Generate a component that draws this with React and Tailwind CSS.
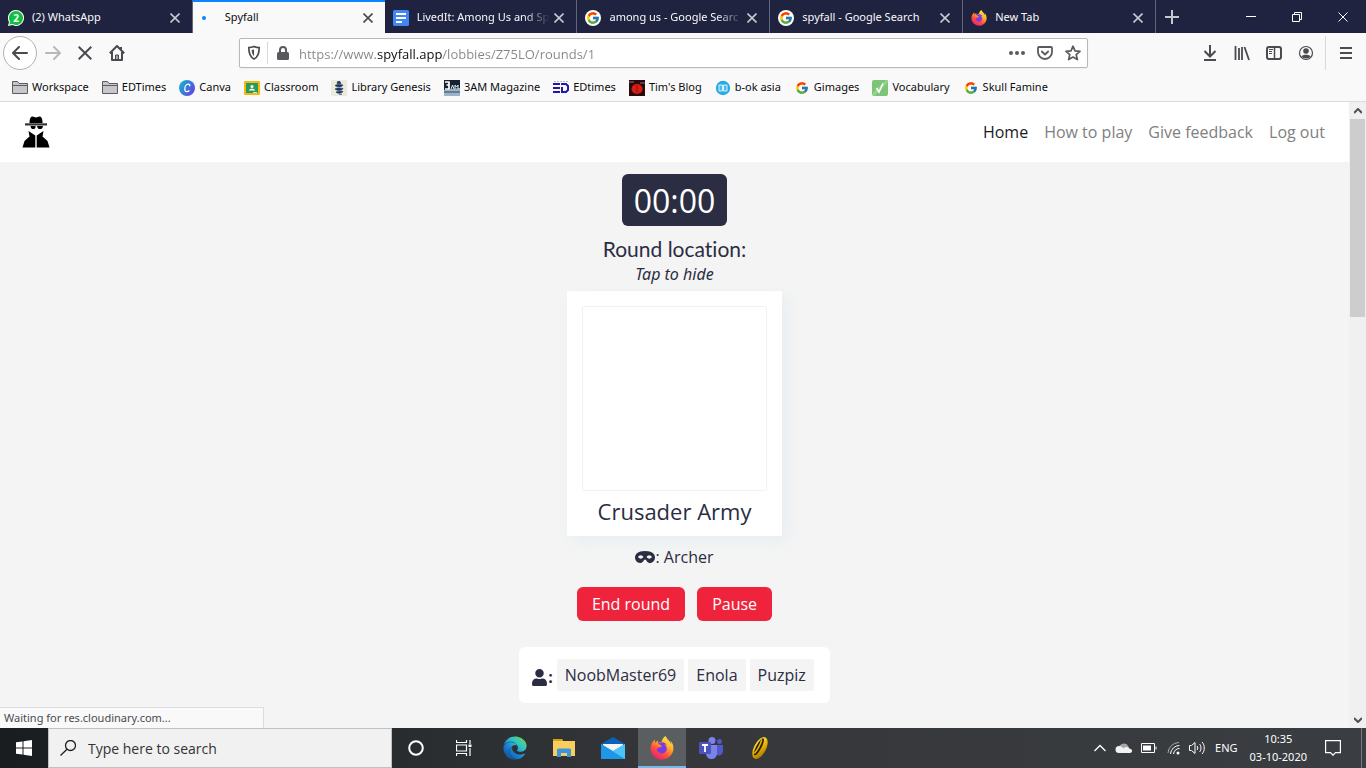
import React, { useState } from "react";
import { FcGoogle } from "react-icons/fc";
import { FaMask, FaUser, FaFirefoxBrowser, FaEdge } from "react-icons/fa";

const Gradients = () => (
    <svg width="0" height="0" className="absolute" aria-hidden="true">
        <defs>
            <linearGradient id="fox" x1="0.8" y1="0" x2="0.2" y2="1">
                <stop offset="0" stopColor="#fff14a" />
                <stop offset="0.35" stopColor="#ffb02b" />
                <stop offset="0.65" stopColor="#ff4f3d" />
                <stop offset="1" stopColor="#e8187c" />
            </linearGradient>
            <linearGradient id="edge" x1="0.9" y1="0.1" x2="0.2" y2="0.9">
                <stop offset="0" stopColor="#62d957" />
                <stop offset="0.35" stopColor="#2fc0cf" />
                <stop offset="0.65" stopColor="#1a86d9" />
                <stop offset="1" stopColor="#0c59a4" />
            </linearGradient>
            <linearGradient id="canva" x1="0" y1="0.2" x2="1" y2="0.8">
                <stop offset="0" stopColor="#12b5cf" />
                <stop offset="1" stopColor="#6a3be4" />
            </linearGradient>
            <linearGradient id="ring" x1="0" y1="0" x2="1" y2="1">
                <stop offset="0" stopColor="#fff04a" />
                <stop offset="0.5" stopColor="#e8b400" />
                <stop offset="1" stopColor="#9a6200" />
            </linearGradient>
        </defs>
    </svg>
);

const Firefox = ({ size }) => (
    <svg width={size} height={size} viewBox="0 0 16 16">
        <circle cx="8" cy="8.4" r="4.6" fill="#7a3be0" />
        <FaFirefoxBrowser size={16} fill="url(#fox)" />
    </svg>
);

const WhatsApp = () => (
    <svg width="16" height="16" viewBox="0 0 16 16">
        <path d="M8 0a8 8 0 1 1-3.6 15.1L0 16l1-4A8 8 0 0 1 8 0z" fill="#fff" />
        <path d="M8 1a7 7 0 1 1-3.4 13.1L1.4 14.6 2 11.6A7 7 0 0 1 8 1z" fill="#10c040" />
        <text x="8" y="11.5" textAnchor="middle" fontSize="10" fontWeight="700" fill="#fff">2</text>
    </svg>
);

const Docs = () => (
    <svg width="16" height="16" viewBox="0 0 16 16">
        <rect width="16" height="16" rx="1.5" fill="#4285f4" />
        <path d="M3 4h10M3 8h10M3 12h6" stroke="#fff" strokeWidth="2" />
    </svg>
);

const GoogleRound = () => (
    <span className="flex size-4 items-center justify-center rounded-full bg-white">
        <FcGoogle size={14} />
    </span>
);

const Loading = () => (
    <svg width="16" height="16" viewBox="0 0 16 16">
        <circle cx="3" cy="8" r="2" fill="#0a84ff" />
    </svg>
);

const Cross = ({ size = 10, width = 1.6 }) => (
    <svg width={size} height={size} viewBox="0 0 10 10" fill="none" stroke="currentColor" strokeWidth={width}>
        <path d="M.5.5l9 9M9.5.5l-9 9" />
    </svg>
);

const Folder = () => (
    <svg width="16" height="16" viewBox="0 0 16 16" stroke="#5c5c60">
        <path d="M.5 13.5v-12h5l1.5 2h8.5v10z" fill="#c8c6ca" />
        <path d="M.5 5.5h15" />
    </svg>
);

const Canva = () => (
    <svg width="16" height="16" viewBox="0 0 16 16" fill="none">
        <circle cx="8" cy="8" r="8" fill="url(#canva)" />
        <path d="M10.6 6.2c.6-1.4-.4-2.4-1.7-2.1-2 .4-3.3 3-3.1 5.3.2 2.7 2.9 3 4.7.9" stroke="#fff" strokeWidth="1.3" />
    </svg>
);

const Classroom = () => (
    <svg width="16" height="16" viewBox="0 0 16 16">
        <rect y="1" width="16" height="14" rx="1" fill="#f4b813" />
        <rect x="2" y="3" width="12" height="10" fill="#2b9b5c" />
        <circle cx="8" cy="6.5" r="1.5" fill="#fff" />
        <path d="M4.8 10.5c.5-2.5 5.9-2.5 6.4 0z" fill="#fff" />
        <path d="M9 12h4v1H9z" fill="#d8eedf" />
    </svg>
);

const Genesis = () => (
    <svg width="16" height="16" viewBox="0 0 16 16">
        <rect width="16" height="16" fill="#eceadc" />
        <path d="M6.5 1.5H9l1 2H6zM4 5.5c2-1.5 6-1 8-.5-1 2.5-6 2.5-8 .5zM4 9c2-1.5 6-1 8-.5-1 2.5-6 2.5-8 .5zM5 12c2-1 6-1 7-.5-1 2-5.5 2.5-7 .5zM8 14.5h3" fill="#17365f" stroke="#17365f" strokeWidth=".6" />
    </svg>
);

const Magazine = () => (
    <svg width="16" height="16" viewBox="0 0 16 16">
        <rect width="16" height="16" fill="#15222f" />
        <path d="M0 10l16-2v8H0z" fill="#9db4c6" />
        <path d="M0 12h16" stroke="#4e6d85" strokeWidth="1.5" />
        <path d="M1 2h4v3H2.5M5 5v4H1" fill="none" stroke="#fff" strokeWidth="1.7" />
        <path d="M7 9l1.500-4L10 9M11 9V5l1.5 2L14 5v4" fill="none" stroke="#dfe8ef" />
    </svg>
);

const EdIcon = () => (
    <svg width="16" height="16" viewBox="0 0 16 16" fill="none" stroke="#2018a8" strokeWidth="2">
        <path d="M1 1.500h14" stroke="#bbb" strokeWidth="1" strokeDasharray="2 1" />
        <path d="M7 4H0M7 8H0M7 12H0M8 4h5l2 2v4l-2 2H8M9 7v4" />
    </svg>
);

const Blog = () => (
    <svg width="16" height="16" viewBox="0 0 16 16">
        <rect width="16" height="16" fill="#2a0a0c" />
        <ellipse cx="8" cy="9" rx="5.5" ry="5" fill="#d81e12" />
        <path d="M8 5v8" stroke="#8b1410" />
        <path d="M0 2h5M11 3h5" stroke="#5b3a4c" strokeWidth="2" />
    </svg>
);

const Bok = () => (
    <svg width="16" height="16" viewBox="0 0 16 16">
        <circle cx="8" cy="8" r="7.2" fill="#29abe2" />
        <path d="M4 5h3.5v6H4zM8.5 5H12v6H8.5z" fill="#4dbce8" stroke="#d5f0fb" />
    </svg>
);

const Vocab = () => (
    <svg width="16" height="16" viewBox="0 0 16 16" fill="none">
        <rect width="16" height="16" rx="2" fill="#7cc576" />
        <path d="M0 14L14 0h2v2L2 16z" fill="#97d191" />
        <path d="M4.5 8L7 12l4-8.5" stroke="#fff" strokeWidth="1.6" />
    </svg>
);

const Spy = () => (
    <svg width="28" height="32" viewBox="0 0 28 32">
        <path d="M7.5 7c0-4 1-6.500 3-6.500 1.500 0 2 1 3.500 1s2-1 3.500-1c2 0 3 2.500 3 6.500z" />
        <path d="M3 7.3h22v2.200H3z" fill="#333" />
        <path d="M8.5 10h5v1.500c-.5 2-4 2-4.500.3zM15 10h6l-.5 1.800c-.5 1.700-4.500 1.700-5-.3z" />
        <path d="M6.5 15l6.800 4.500V31.500H.5L2.500 25l5-4.500z" />
        <path d="M21.5 15l-6.800 4.500V31.500h12.800L25.500 25l-5-4.500z" />
    </svg>
);

const tabs = [
    { title: "(2) WhatsApp", icon: <WhatsApp /> },
    { title: "Spyfall", icon: <Loading />, active: true },
    { title: "LivedIt: Among Us and Sp", icon: <Docs />, fade: true },
    { title: "among us - Google Searc", icon: <GoogleRound />, fade: true },
    { title: "spyfall - Google Search", icon: <GoogleRound /> },
    { title: "New Tab", icon: <Firefox size={16} /> },
];

const bookmarks = [
    { title: "Workspace", icon: <Folder /> },
    { title: "EDTimes", icon: <Folder /> },
    { title: "Canva", icon: <Canva /> },
    { title: "Classroom", icon: <Classroom /> },
    { title: "Library Genesis", icon: <Genesis /> },
    { title: "3AM Magazine", icon: <Magazine /> },
    { title: "EDtimes", icon: <EdIcon /> },
    { title: "Tim's Blog", icon: <Blog /> },
    { title: "b-ok asia", icon: <Bok /> },
    { title: "Gimages", icon: <FcGoogle size={14} /> },
    { title: "Vocabulary", icon: <Vocab /> },
    { title: "Skull Famine", icon: <FcGoogle size={14} /> },
];

const TabBar = () => (
    <div className="flex h-[33px] shrink-0 bg-[#202340] font-['Noto_Sans',sans-serif] text-[#f9f9fa]">
        <div className="flex min-w-0 flex-1">
            {tabs.map((tab) => (
                <div
                    key={tab.title}
                    className={
                        tab.active
                            ? "flex min-w-0 flex-1 items-center border-t-2 border-[#0a84ff] bg-[#f9f9fa] pr-3 pl-2 text-[#0c0c0d]"
                            : "flex min-w-0 flex-1 items-center border-r border-[#63657a] pt-0.5 pr-3 pl-2"
                    }
                >
                    <span className="mr-2 shrink-0">{tab.icon}</span>
                    <span
                        className={
                            tab.fade
                                ? "min-w-0 flex-1 mask-r-from-80% text-[11px] whitespace-nowrap"
                                : "min-w-0 flex-1 text-[11px] whitespace-nowrap"
                        }
                    >
                        {tab.title}
                    </span>
                    <button
                        aria-label={"Close " + tab.title}
                        className={tab.active ? "ml-1 text-[#4a4a4f]" : "ml-1 text-[#c6c7cf]"}
                    >
                        <Cross />
                    </button>
                </div>
            ))}
        </div>
        <div className="flex w-[210px] shrink-0 items-center">
            <button aria-label="New tab" className="flex w-8 justify-center text-[#c6c7cf]">
                <svg width="14" height="14" viewBox="0 0 14 14" stroke="currentColor" strokeWidth="2">
                    <path d="M7 0v14M0 7h14" />
                </svg>
            </button>
            <div className="flex flex-1 justify-end">
                <button aria-label="Minimize" className="flex w-[46px] justify-center">
                    <svg width="10" height="10" stroke="#fff"><path d="M0 4.500h10" /></svg>
                </button>
                <button aria-label="Restore" className="flex w-[46px] justify-center">
                    <svg width="10" height="10" stroke="#fff" fill="none">
                        <path d="M.5 2.500h7v7h-7zM2.500 2V.5h7v7H8" />
                    </svg>
                </button>
                <button aria-label="Close window" className="flex w-[46px] justify-center">
                    <Cross width={1} />
                </button>
            </div>
        </div>
    </div>
);

const Toolbar = () => {
    const [url, setUrl] = useState("https://www.spyfall.app/lobbies/Z75LO/rounds/1");

    return (
        <div className="flex h-10 shrink-0 items-center bg-[#f9f9fa] pl-[3px] text-[#4a4a4f]">
            <button aria-label="Back" className="flex size-[34px] items-center justify-center rounded-full border border-[#b1b1b3] bg-white">
                <svg width="16" height="16" viewBox="0 0 16 16" fill="none" stroke="currentColor" strokeWidth="2" strokeLinecap="round" strokeLinejoin="round">
                    <path d="M15 8H1.500M7 2L1 8l6 6" />
                </svg>
            </button>
            <button aria-label="Forward" className="flex w-8 justify-center text-[#b8b8ba]">
                <svg width="16" height="16" viewBox="0 0 16 16" fill="none" stroke="currentColor" strokeWidth="2" strokeLinecap="round" strokeLinejoin="round">
                    <path d="M1 8h13.500M9 2l6 6-6 6" />
                </svg>
            </button>
            <button aria-label="Stop" className="flex w-8 justify-center">
                <Cross size={14} width={1.4} />
            </button>
            <button aria-label="Home" className="flex w-8 justify-center">
                <svg width="16" height="16" viewBox="0 0 16 16" fill="none" stroke="currentColor" strokeWidth="2" strokeLinejoin="round">
                    <path d="M.8 8.200L8 1l7.200 7.200M3 7v8h10V7M12 2v3" />
                    <path d="M8 15v-5M6.500 10h3v5h-3z" strokeWidth="1" />
                </svg>
            </button>

            <div className="mr-[106px] ml-[106px] flex h-[30px] min-w-0 flex-1 items-center rounded-xs border border-[#b8b8ba] bg-white shadow-xs">
                <svg className="ml-[7px] shrink-0" width="14" height="16" viewBox="0 0 14 16" fill="none" stroke="currentColor" strokeWidth="1.7">
                    <path d="M7 1.500c2 .8 3.500 1 5.200 1 0 5.500-.7 9.500-5.200 11.500-4.500-2-5.200-6-5.200-11.500C3.500 2.500 5 2.300 7 1.500z" />
                    <path d="M7 4.500c-.8.3-1.400.5-2.300.6.2 2.700.5 4.600 2.300 6z" fill="currentColor" stroke="none" />
                </svg>
                <span className="ml-1.5 h-[22px] w-px bg-[#d7d7db]" />
                <svg className="mx-2 shrink-0" width="14" height="16" viewBox="0 0 14 16" fill="#5a5a5e">
                    <rect x="1" y="7" width="12" height="8" rx="1.5" />
                    <path d="M4 8V5a3 3 0 0 1 6 0v3" fill="none" stroke="#5a5a5e" strokeWidth="2" />
                </svg>
                <input
                    aria-label="Address"
                    value={url}
                    onChange={(e) => setUrl(e.target.value)}
                    className="min-w-0 flex-1 bg-[linear-gradient(90deg,#86868a_79px,#0c0c0d_79px,#0c0c0d_144px,#86868a_144px)] bg-clip-text pt-1 pl-px text-[13px] text-transparent outline-none"
                />
                <button aria-label="Page actions" className="flex w-7 justify-center">
                    <svg width="16" height="16" viewBox="0 0 16 16" fill="#5a5a5e">
                        <circle cx="2" cy="8" r="2" /><circle cx="8" cy="8" r="2" /><circle cx="14" cy="8" r="2" />
                    </svg>
                </button>
                <button aria-label="Save to Pocket" className="flex w-7 justify-center">
                    <svg width="16" height="16" viewBox="0 0 16 16" fill="none" stroke="#5a5a5e" strokeWidth="1.8" strokeLinecap="round" strokeLinejoin="round">
                        <path d="M2 2h12c.7 0 1 .4 1 1v4a7 7 0 0 1-14 0V3c0-.6.3-1 1-1zM4.800 6.500L8 9.500l3.200-3" />
                    </svg>
                </button>
                <button aria-label="Bookmark this page" className="flex w-7 justify-center">
                    <svg width="16" height="16" viewBox="0 0 16 16" fill="none" stroke="#5a5a5e" strokeWidth="1.7" strokeLinejoin="round">
                        <path d="M8 1.200l2 4.600 5 .5-3.800 3.300 1.200 5L8 12l-4.400 2.600 1.200-5L1 6.300l5-.5z" />
                    </svg>
                </button>
            </div>

            <button aria-label="Downloads" className="flex w-8 justify-center">
                <svg width="16" height="16" viewBox="0 0 16 16" fill="none" stroke="currentColor" strokeWidth="2">
                    <path d="M8 0v11M2.500 6L8 11.500 13.500 6M2 15h12" />
                </svg>
            </button>
            <button aria-label="Library" className="flex w-8 justify-center">
                <svg width="16" height="16" viewBox="0 0 16 16" fill="none" stroke="currentColor" strokeWidth="2">
                    <path d="M1.500 1v14M5 3v12M8 2v13M10.500 2L15 15" strokeWidth="1.8" />
                </svg>
            </button>
            <button aria-label="Sidebar" className="flex w-8 justify-center">
                <svg width="16" height="16" viewBox="0 0 16 16" fill="none" stroke="currentColor" strokeWidth="2">
                    <rect x="1" y="2" width="14" height="12" rx="2" />
                    <path d="M8.500 2v12" strokeWidth="1.5" />
                    <path d="M3 4.500h4M3 6.500h3M3 8.500h3" strokeWidth="1" />
                </svg>
            </button>
            <button aria-label="Account" className="flex w-8 justify-center">
                <svg width="16" height="16" viewBox="0 0 16 16" fill="currentColor">
                    <circle cx="8" cy="8" r="6.5" fill="none" stroke="currentColor" strokeWidth="1.2" />
                    <circle cx="8" cy="6" r="2.8" />
                    <path d="M3.300 11.500C4.500 9 11.500 9 12.700 11.500 10.500 14 5.500 14 3.300 11.500z" />
                </svg>
            </button>
            <span className="ml-[3px] h-[34px] w-px bg-[#d7d7db]" />
            <button aria-label="Menu" className="flex w-10 justify-center">
                <svg width="14" height="16" viewBox="0 0 14 16" stroke="currentColor" strokeWidth="2">
                    <path d="M1 3h12M1 8h12M1 13h12" />
                </svg>
            </button>
        </div>
    );
};

const Bookmarks = () => (
    <div className="flex h-[29px] shrink-0 items-center gap-[13px] border-b border-[#dcdcdf] bg-[#f9f9fa] px-3 pt-px font-['Noto_Sans',sans-serif] text-[11px] text-[#0c0c0d]">
        {bookmarks.map((b) => (
            <a key={b.title} href="#" className="flex items-center gap-1 whitespace-nowrap">
                <span className="flex size-4 items-center justify-center">{b.icon}</span>
                {b.title}
            </a>
        ))}
    </div>
);

const Header = () => (
    <header className="flex h-[60px] items-center justify-between bg-white pr-6 pl-[22px]">
        <a href="#" aria-label="Spyfall">
            <Spy />
        </a>
        <nav className="flex gap-4 text-base text-[#808080]">
            <a href="#" className="text-[#1a1a1a]">Home</a>
            <a href="#">How to play</a>
            <a href="#">Give feedback</a>
            <a href="#">Log out</a>
        </nav>
    </header>
);

const Round = () => {
    const players = ["NoobMaster69", "Enola", "Puzpiz"];

    return (
        <main className="flex flex-col items-center pt-3 text-base leading-6 text-[#2b2d42]">
            <div className="rounded-md bg-[#2b2d42] px-3 pt-[7px] pb-[5px] text-[32px] leading-10 text-white">00:00</div>
            <h5 className="mt-[11px] mb-px font-[Lato,sans-serif] text-[21px] leading-6 [font-variant-ligatures:none]">Round location:</h5>
            <em className="font-['Noto_Sans',sans-serif]">Tap to hide</em>
            <div className="mt-[5px] flex flex-col bg-white px-[15px] pt-[15px] pb-2 shadow-[5px_5px_15px_#e6eef1]">
                <div className="size-[185px] rounded-xs border border-[#edf2f4]" />
                <h4 className="mt-1 text-center text-[22px] leading-[33px]">Crusader Army</h4>
            </div>
            <p className="mt-[9px] flex items-center">
                <FaMask size={20} />: Archer
            </p>
            <div className="mt-[18px] flex gap-3 text-white">
                <button className="h-[34px] rounded-md bg-[#ef233c] px-[15px]">End round</button>
                <button className="h-[34px] rounded-md bg-[#ef233c] px-[15px]">Pause</button>
            </div>
            <div className="mt-[26px] flex items-center rounded-md bg-white py-3 pr-4 pl-3">
                <span className="mr-1 flex items-center pt-1 font-bold">
                    <FaUser size={17} />:
                </span>
                <ul className="flex gap-1">
                    {players.map((p) => (
                        <li key={p} className="rounded-xs bg-[#f4f4f4] px-2 py-1">{p}</li>
                    ))}
                </ul>
            </div>
        </main>
    );
};

const Scrollbar = () => (
    <div className="flex w-[17px] shrink-0 flex-col items-center bg-[#f0f0f0] text-[#505050]">
        <span className="flex h-[17px] items-center">
            <svg width="8" height="6" viewBox="0 0 8 6" fill="none" stroke="currentColor" strokeWidth="2"><path d="M0 5l4-4 4 4" /></svg>
        </span>
        <span className="h-[198px] w-[15px] bg-[#cdcdcd]" />
        <span className="mt-auto flex h-[17px] items-center">
            <svg width="8" height="6" viewBox="0 0 8 6" fill="none" stroke="currentColor" strokeWidth="2"><path d="M0 1l4 4 4-4" /></svg>
        </span>
    </div>
);

const TaskView = () => (
    <svg width="16" height="16" viewBox="0 0 16 16" fill="none" stroke="#fff" strokeWidth="1.2">
        <path d="M.5 0v2.500h10V0M.5 16v-2.500h10V16M.5 5h10v6H.5zM14 0v4M14 8v8" />
        <path d="M12.500 4.500h3v2.500h-3z" fill="#fff" stroke="none" />
    </svg>
);

const Explorer = () => (
    <svg width="22" height="20" viewBox="0 0 22 20">
        <path d="M0 1h9l1 2h12v15H0z" fill="#f8cf5c" />
        <path d="M0 1h9l1 2H0z" fill="#dd9e12" />
        <path d="M4 19v-7c0-1 .5-1.500 1.500-1.500h11c1 0 1.500.5 1.500 1.500v7h-4v-4H8v4z" fill="#3a96dd" />
    </svg>
);

const Mail = () => (
    <svg width="24" height="22" viewBox="0 0 24 22">
        <path d="M0 7l12-7 12 7v4H0z" fill="#0c62b4" />
        <path d="M2 7h20v8H2z" fill="#f4f4f4" />
        <path d="M0 7l12 7 12-7v15H0z" fill="#2ba6ee" />
        <path d="M0 22l12-8 12-7v15z" fill="#4cc4f7" />
        <path d="M0 7l24 15H0z" fill="#1e97e8" />
    </svg>
);

const Teams = () => (
    <svg width="24" height="22" viewBox="0 0 24 22">
        <circle cx="13" cy="3.5" r="3.5" fill="#7b83eb" />
        <circle cx="20.5" cy="4.5" r="2.5" fill="#5059c9" />
        <path d="M16 8h8v6c0 5-6 6-8 2z" fill="#5059c9" />
        <path d="M7 8h11v8c0 8-11 8-11 0z" fill="#7b83eb" />
        <rect y="5" width="12" height="12" rx="1" fill="#4b53bc" />
        <path d="M3 8h6M6 8v7" stroke="#fff" strokeWidth="1.8" />
    </svg>
);

const Ring = () => (
    <svg width="20" height="24" viewBox="0 0 20 24">
        <g transform="rotate(28 10 12)">
            <ellipse cx="10" cy="12" rx="6" ry="12" fill="url(#ring)" />
            <ellipse cx="8.5" cy="11.5" rx="2.6" ry="9.5" fill="#2b1d00" />
            <path d="M7.5 3.5c1.200 4 1.200 12 0 16" stroke="#e5b010" fill="none" strokeWidth="1.6" />
        </g>
    </svg>
);

const apps = [
    { name: "Microsoft Edge", icon: <FaEdge size={24} fill="url(#edge)" /> },
    { name: "File Explorer", icon: <Explorer /> },
    { name: "Mail", icon: <Mail /> },
    { name: "Firefox", icon: <Firefox size={24} />, active: true },
    { name: "Microsoft Teams", icon: <Teams /> },
    { name: "Ring", icon: <Ring /> },
];

const Taskbar = () => (
    <footer className="flex h-10 shrink-0 items-stretch bg-linear-to-r from-[#191d20] via-[#35373a] to-[#3a3d41] text-white">
        <button aria-label="Start" className="flex w-12 items-center justify-center">
            <svg width="16" height="16" viewBox="0 0 16 16" fill="#fff">
                <path d="M0 2.300L6.500 1.400v6.100H0zM7.500 1.200L16 0v7.500H7.500zM0 8.500h6.500v6.100L0 13.700zM7.500 8.500H16V16l-8.500-1.200z" />
            </svg>
        </button>
        <label className="flex w-[344px] items-center gap-3 border border-[#c0c0c0] bg-[#f1f1f1] pl-[11px]">
            <svg width="16" height="16" viewBox="0 0 16 16" fill="none" stroke="#222" strokeWidth="1.3">
                <circle cx="10.5" cy="5.5" r="5" />
                <path d="M7 9.300L.5 15.500" />
            </svg>
            <input
                aria-label="Search"
                placeholder="Type here to search"
                className="min-w-0 flex-1 bg-transparent pt-0.5 text-sm placeholder:text-[#333] outline-none"
            />
        </label>
        <button aria-label="Cortana" className="flex w-12 items-center justify-center">
            <svg width="16" height="16" viewBox="0 0 16 16" fill="none" stroke="#fff" strokeWidth="2"><circle cx="8" cy="8" r="6.8" /></svg>
        </button>
        <button aria-label="Task view" className="flex w-12 items-center justify-center">
            <TaskView />
        </button>
        <div className="ml-[3px] flex gap-px">
            {apps.map((app) => (
                <button
                    key={app.name}
                    aria-label={app.name}
                    className={
                        app.active
                            ? "flex w-12 items-center justify-center border-b-2 border-[#76b9ed] bg-[#5b5e61] pt-0.5"
                            : "flex w-12 items-center justify-center"
                    }
                >
                    {app.icon}
                </button>
            ))}
        </div>

        <div className="ml-auto flex items-center font-['Noto_Sans',sans-serif] text-[11px]">
            <svg className="mr-2" width="14" height="12" viewBox="0 0 14 12" fill="none" stroke="#fff" strokeWidth="1.3"><path d="M1.500 9L7 3.500 12.500 9" /></svg>
            <svg className="mr-2" width="18" height="12" viewBox="0 0 18 12">
                <path d="M4 7a5 5 0 0 1 9.500-2.500L15 8z" fill="#a5a7a9" />
                <path d="M4 11a3.500 3.500 0 0 1 0-7c2 0 3 1 4.500 2.500C10 4.500 13 4.500 14 6.500c4 0 4 4.500 1 4.500z" fill="#f2f2f2" />
            </svg>
            <svg className="mr-2.5" width="16" height="10" viewBox="0 0 16 10" fill="none" stroke="#fff">
                <path d="M.5.5h13v9H.5zM15 3.500v3" />
                <path d="M2 2.500h8v5H2z" fill="#fff" stroke="none" />
            </svg>
            <svg className="mr-2" width="14" height="14" viewBox="0 0 14 14" fill="none" stroke="#fff">
                <path d="M1 12A11 11 0 0 1 12 1.500" stroke="#aaa" />
                <path d="M3.500 13A9 9 0 0 1 12.500 4.500M6.500 13a6 6 0 0 1 6-5.500" />
                <circle cx="11" cy="12" r="1.5" fill="#fff" stroke="none" />
            </svg>
            <svg className="mr-2.5" width="16" height="14" viewBox="0 0 16 14" fill="none" stroke="#fff">
                <path d="M.5 4.500h2L6 1.500v11L2.500 9.500h-2zM8 5c1 1 1 3 0 4M10.500 3c2 2 2 6 0 8M13 1c3 3 3 9 0 12" />
            </svg>
            <span>ENG</span>
            <div className="ml-3 text-center leading-[18px]">
                <div>10:35</div>
                <div>03-10-2020</div>
            </div>
            <button aria-label="Notifications" className="mr-5 ml-[18px]">
                <svg width="16" height="16" viewBox="0 0 16 16" fill="none" stroke="#fff" strokeWidth="1.2">
                    <path d="M.6.600h14.800v12H10.500L8 15.200 5.500 12.600H.6z" />
                </svg>
            </button>
            <span className="mr-1 h-10 w-px bg-[#77797c]" />
        </div>
    </footer>
);

const App = () => {
    return (
        <div className="flex h-screen flex-col overflow-hidden font-['Open_Sans','Noto_Sans',sans-serif]">
            <Gradients />
            <TabBar />
            <Toolbar />
            <Bookmarks />
            <div className="relative flex min-h-0 flex-1 bg-[#f4f4f4]">
                <div className="min-w-0 flex-1 overflow-hidden">
                    <Header />
                    <Round />
                </div>
                <Scrollbar />
                <div className="absolute bottom-0 left-0 w-[264px] border-t border-r border-[#dcdcdf] bg-[#f9f9fa] px-1 font-['Noto_Sans',sans-serif] text-[11px] leading-5 text-[#4a4a4f]">
                    Waiting for res.cloudinary.com...
                </div>
            </div>
            <Taskbar />
        </div>
    );
};

export default App;
